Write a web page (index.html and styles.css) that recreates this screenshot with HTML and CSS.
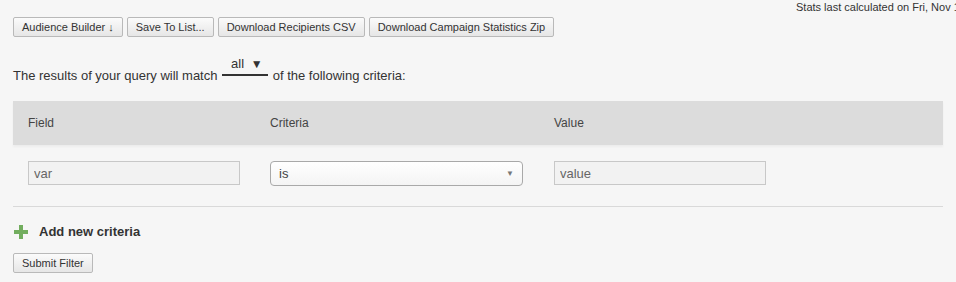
FILE: index.html
```
<!DOCTYPE html>
<html lang="en">
<head>
  <meta charset="UTF-8">
  <title>Audience Builder</title>
  <link rel="stylesheet" href="styles.css">
</head>
<body>
  <div class="stats">Stats last calculated on Fri, Nov 13, 2015 at 10:42 AM</div>

  <div class="toolbar">
    <button class="btn">Audience Builder &#8595;</button>
    <button class="btn">Save To List...</button>
    <button class="btn">Download Recipients CSV</button>
    <button class="btn">Download Campaign Statistics Zip</button>
  </div>

  <p class="match">
    The results of your query will match
    <span class="match-select">all <span class="caret">&#9660;</span></span>
    of the following criteria:
  </p>

  <div class="criteria">
    <div class="criteria-head">
      <div class="cell">Field</div>
      <div class="cell">Criteria</div>
      <div class="cell">Value</div>
    </div>
    <div class="criteria-row">
      <div class="cell"><input class="field" type="text" value="var"></div>
      <div class="cell">
        <div class="select"><span>is</span><span class="select-caret">&#9660;</span></div>
      </div>
      <div class="cell"><input class="field" type="text" value="value"></div>
    </div>
  </div>

  <div class="add">
    <svg class="plus" width="14" height="14" viewBox="0 0 14 14">
      <path d="M7 0v14M0 7h14" stroke="#72ad5e" stroke-width="4"/>
    </svg>
    <span>Add new criteria</span>
  </div>

  <button class="btn">Submit Filter</button>
</body>
</html>
```

FILE: styles.css
```
html, body {
    overflow: hidden;
}
body {
    background-color: #f6f6f6;
    color: #333;
    font-family: "Liberation Sans", Arial, sans-serif;
    font-size: 12px;
    margin: 0;
    padding: 0 13px;
}

/* top */
.stats {
    color: #333;
    font-size: 11px;
    height: 17px;
    line-height: 14px;
    margin-right: -200px;
    padding-left: 783px;
    white-space: nowrap;
}
.toolbar {
    display: flex;
    gap: 4px;
}
.btn {
    background: linear-gradient(#fbfbfb, #e6e6e6);
    border: solid 1px #b9b9b9;
    border-radius: 2px;
    color: #333;
    font-family: "Liberation Sans", Arial, sans-serif;
    font-size: 11px;
    height: 20px;
    line-height: 18px;
    padding: 0 8px;
}

/* match line */
.match {
    font-size: 13px;
    line-height: 16px;
    margin: 20px 0 0;
}
.match-select {
    border-bottom: solid 2px #333;
    display: inline-block;
    height: 17px;
    line-height: 14px;
    margin: 0 1px;
    overflow: hidden;
    padding-left: 9px;
    vertical-align: 4px;
    width: 37px;
}
.caret {
    font-size: 12px;
    margin-left: 3px;
}

/* criteria table */
.criteria {
    margin-top: 17px;
}
.criteria-head,
.criteria-row {
    display: grid;
    grid-template-columns: 242px 284px 1fr;
}
.criteria-head {
    background-color: #dcdcdc;
    box-shadow: 0 2px 2px rgba(0,0,0,.04);
    color: #444;
    height: 44px;
    line-height: 44px;
}
.cell {
    padding: 0 15px;
}
.criteria-row {
    border-bottom: solid 1px #d9d9d9;
    padding: 16px 0 20px;
}
.field {
    background-color: #f2f2f2;
    border: solid 1px #c8c8c8;
    box-sizing: border-box;
    color: #666;
    font-family: "Liberation Sans", Arial, sans-serif;
    font-size: 13px;
    height: 24px;
    padding: 0 5px;
    width: 212px;
}
.select {
    align-items: center;
    background: linear-gradient(#fff, #f4f4f4);
    border: solid 1px #a9a9a9;
    border-radius: 4px;
    box-sizing: border-box;
    color: #444;
    display: flex;
    font-size: 13px;
    height: 25px;
    justify-content: space-between;
    padding: 0 8px;
    width: 253px;
}
.select-caret {
    color: #777;
    font-size: 8px;
}

/* add */
.add {
    align-items: center;
    display: flex;
    font-size: 13px;
    font-weight: bold;
    gap: 11px;
    margin: 17px 0 14px 1px;
}
```
